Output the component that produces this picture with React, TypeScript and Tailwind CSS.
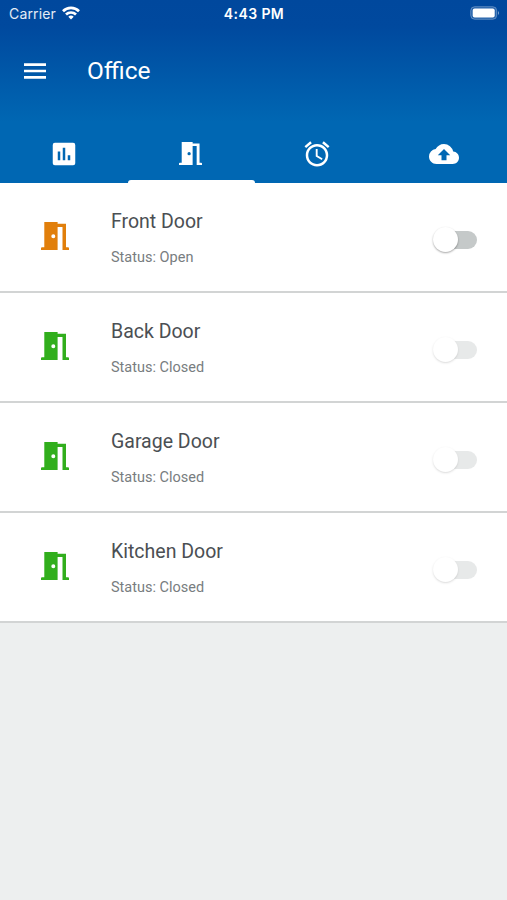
import React from 'react';
import { MdAlarm, MdCloudUpload } from 'react-icons/md';

const doors = [
  { name: 'Front Door', open: true },
  { name: 'Back Door', open: false },
  { name: 'Garage Door', open: false },
  { name: 'Kitchen Door', open: false },
];

function DoorIcon({ className }: { className: string }) {
  return (
    <svg viewBox="0 0 28 28" fill="currentColor" className={className}>
      <path
        fillRule="evenodd"
        d="M3.3 0H16.600v1.800H25v23.400h2a1 1 0 0 1 1 1v1.800h-6.500V5H16.600V28H0v-1.800a1 1 0 0 1 1-1h2.300zM12.300 12.200a2 2 0 1 0 0 4a2 2 0 0 0 0-4z"
      />
    </svg>
  );
}

function ChartIcon() {
  return (
    <svg viewBox="0 0 24 24" fill="currentColor" className="size-[30px]">
      <path
        fillRule="evenodd"
        d="M4.7 3h14.6A1.7 1.7 0 0 1 21 4.700v14.600a1.700 1.700 0 0 1-1.700 1.700H4.700A1.700 1.700 0 0 1 3 19.300V4.700A1.700 1.700 0 0 1 4.700 3zM7 10v7h2v-7zM11 7v10h2V7zM15 13v4h2v-4z"
      />
    </svg>
  );
}

function StatusBar() {
  return (
    <div className="grid h-7 grid-cols-3 items-center pl-[9px] pr-[7px]">
      <div className="flex items-center gap-[6px]">
        <span className="font-[Inter,sans-serif] text-[14px] leading-4 tracking-[0.15px] text-white/90">Carrier</span>
        <svg viewBox="0 0 18 14" className="-mt-[3px] h-[14px] w-[18px]" fill="none" stroke="white" strokeWidth="2.700">
          <path d="M1 5.200A11.500 11.500 0 0 1 17 5.200" />
          <path d="M4 8.500A7.200 7.200 0 0 1 14 8.500" />
          <path d="M9 13.500L6.300 10.700A4 4 0 0 1 11.700 10.700z" fill="white" stroke="none" />
        </svg>
      </div>
      <span className="pr-[1px] text-center font-[Inter,sans-serif] text-[14px] font-semibold leading-4 tracking-[0.4px] text-white">
        4:43 PM
      </span>
      <svg viewBox="0 0 30 14" className="-mt-[2px] h-[14px] w-[30px] justify-self-end">
        <rect x="0.700" y="0.700" width="26" height="12.600" rx="4" fill="white" fillOpacity="0.15" stroke="white" strokeOpacity="0.300" />
        <rect x="2.700" y="2.500" width="22" height="9" rx="2" fill="white" />
        <path d="M28 5q2 2 0 4z" fill="white" fillOpacity="0.500" />
      </svg>
    </div>
  );
}

function Toggle({ enabled }: { enabled: boolean }) {
  return (
    <div className={`relative mt-[6px] flex h-7 w-[44px] items-center justify-end ${enabled ? '' : 'opacity-40'}`}>
      <div className="h-[18px] w-[38px] rounded-full bg-[#c5c9c9]" />
      <div className="absolute left-0 top-px size-[25px] rounded-full bg-white shadow-[0_1px_2px_rgba(0,0,0,0.35)]" />
    </div>
  );
}

export default function App() {
  return (
    <div className="flex min-h-screen flex-col bg-[#edefef] font-[Roboto,sans-serif]">
      <header className="h-[183px] bg-[linear-gradient(#00489d_0px,#00499e_26px,#0067b3_122px)] text-white">
        <StatusBar />
        <div className="flex h-[86px] items-center gap-[41px] pl-6">
          <svg viewBox="0 0 22 16" fill="currentColor" className="h-4 w-[22px]">
            <path d="M0 .3h22v2.700H0zM0 6.650h22v2.700H0zM0 13h22v2.700H0z" />
          </svg>
          <h1 className="text-[24.500px] leading-8">Office</h1>
        </div>
        <nav className="grid h-[69px] grid-cols-4">
          <div className="flex items-center justify-center pl-[2px] pt-[10px]">
            <ChartIcon />
          </div>
          <div className="relative flex items-center justify-center pt-[10px]">
            <DoorIcon className="size-[23px]" />
            <div className="absolute bottom-0 left-[1px] h-[3px] w-full rounded-t-[3px] bg-white" />
          </div>
          <div className="flex items-center justify-center pt-[10px]">
            <MdAlarm className="size-[30px]" />
          </div>
          <div className="flex items-center justify-center pt-[10px]">
            <MdCloudUpload className="size-[30px]" />
          </div>
        </nav>
      </header>

      <main>
        {doors.map((door) => (
          <div key={door.name} className="flex h-[110px] items-center border-b-2 border-[#d2d4d4] bg-white pl-[41px] pr-[30px]">
            <DoorIcon className={door.open ? 'mb-[3px] size-7 text-[#e17f0b]' : 'mb-[3px] size-7 text-[#31ae1c]'} />
            <div className="ml-[42px] flex-1 pt-[4px]">
              <h2 className="text-[19.500px] leading-6 text-[#4b4f53]">{door.name}</h2>
              <p className="mt-[14px] text-[14.500px] leading-5 text-[#787d80]">Status: {door.open ? 'Open' : 'Closed'}</p>
            </div>
            <Toggle enabled={door.open} />
          </div>
        ))}
      </main>
    </div>
  );
}
